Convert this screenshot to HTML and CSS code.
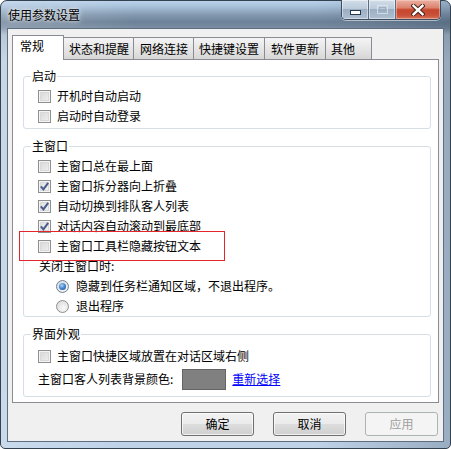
FILE: index.html
```html
<!DOCTYPE html>
<html lang="zh-CN">
<head>
<meta charset="utf-8">
<title>使用参数设置</title>
<link rel="stylesheet" href="styles.css">
</head>
<body>
<div class="window">
  <div class="titlebar">
    <div class="title">使用参数设置</div>
    <div class="caption">
      <div class="cbtn min">
        <svg width="11" height="5" viewBox="0 0 11 5"><rect x="0.5" y="0.5" width="10" height="4" fill="#fff" stroke="#2a3a4e"/></svg>
      </div>
      <div class="cbtn max">
        <svg width="11" height="9" viewBox="0 0 11 9"><rect x="0.5" y="0.5" width="10" height="8" fill="none" stroke="#e4ebf2" stroke-opacity="0.7"/><rect x="2.5" y="2.5" width="6" height="3" fill="none" stroke="#9aaabb" stroke-opacity="0.8"/></svg>
      </div>
      <div class="cbtn close">
        <svg width="14" height="12" viewBox="0 0 14 12"><path d="M2.5 1.8 L11.5 10.2 M11.5 1.8 L2.5 10.2" stroke="#4b2119" stroke-width="4.4" stroke-linecap="square"/><path d="M2.5 1.8 L11.5 10.2 M11.5 1.8 L2.5 10.2" stroke="#fff" stroke-width="2.4" stroke-linecap="square"/></svg>
      </div>
    </div>
  </div>
  <div class="client">
    <div class="tabs">
      <div class="tab sel">常规</div>
      <div class="tab t2">状态和提醒</div>
      <div class="tab t3">网络连接</div>
      <div class="tab t4">快捷键设置</div>
      <div class="tab t5">软件更新</div>
      <div class="tab t6">其他</div>
    </div>
    <div class="panel">
      <fieldset class="group g1">
        <legend>启动</legend>
        <div class="gbody b1">
          <div class="row"><span class="cb"></span>开机时自动启动</div>
          <div class="row"><span class="cb"></span>启动时自动登录</div>
        </div>
      </fieldset>
      <fieldset class="group g2">
        <legend>主窗口</legend>
        <div class="gbody b2">
          <div class="row"><span class="cb"></span>主窗口总在最上面</div>
          <div class="row"><span class="cb on"><svg width="9" height="9" viewBox="0 0 9 9"><path d="M0.8 4.4 L3.4 7.4 L8.2 0.9" fill="none" stroke="#4a5c8c" stroke-width="2"/></svg></span>主窗口拆分器向上折叠</div>
          <div class="row"><span class="cb on"><svg width="9" height="9" viewBox="0 0 9 9"><path d="M0.8 4.4 L3.4 7.4 L8.2 0.9" fill="none" stroke="#4a5c8c" stroke-width="2"/></svg></span>自动切换到排队客人列表</div>
          <div class="row"><span class="cb on"><svg width="9" height="9" viewBox="0 0 9 9"><path d="M0.8 4.4 L3.4 7.4 L8.2 0.9" fill="none" stroke="#4a5c8c" stroke-width="2"/></svg></span>对话内容自动滚动到最底部</div>
          <div class="row"><span class="cb"></span>主窗口工具栏隐藏按钮文本</div>
          <div class="row sub">关闭主窗口时:</div>
          <div class="row radio-row"><span class="rb on"><span class="dot"></span></span>隐藏到任务栏通知区域，不退出程序。</div>
          <div class="row radio-row"><span class="rb"></span>退出程序</div>
        </div>
      </fieldset>
      <fieldset class="group g3">
        <legend>界面外观</legend>
        <div class="gbody b3">
          <div class="row"><span class="cb"></span>主窗口快捷区域放置在对话区域右侧</div>
          <div class="row color-row"><span class="clabel">主窗口客人列表背景颜色:</span><span class="swatch"></span><a class="link" href="#">重新选择</a></div>
        </div>
      </fieldset>
    </div>
    <div class="actions">
      <button class="btn">确定</button>
      <button class="btn">取消</button>
      <button class="btn" disabled>应用</button>
    </div>
  </div>
  <div class="annot"></div>
</div>
</body>
</html>
```

FILE: styles.css
```css
* { box-sizing: border-box; }
html, body { margin: 0; padding: 0; background: #ffffff; }
body {
  width: 451px;
  height: 449px;
  font-family: "Noto Sans CJK SC", "Noto Sans", sans-serif;
  font-size: 12px;
  color: #000;
}
.window {
  position: relative;
  width: 451px;
  height: 449px;
  border: 1px solid #34414f;
  border-radius: 7px 7px 5px 5px;
  padding: 0 6px 6px 6px;
  background:
    linear-gradient(to right, rgba(255,255,255,0.18), rgba(255,255,255,0) 30%, rgba(20,40,60,0) 70%, rgba(20,40,60,0.22)),
    linear-gradient(#b9d2ea 0, #aac3dc 5px, #8399b0 14px, #6d8298 21px, #7b8ea3 27px, #aabdd1 34px, #bccde0 60px, #bed2e8 100%);
  display: flex;
  flex-direction: column;
}
.titlebar {
  height: 27px;
  display: flex;
  align-items: flex-start;
}
.title {
  padding-left: 1px;
  margin-top: 6px;
  line-height: 16px;
  color: #000;
  text-shadow: 0 0 6px rgba(255,255,255,0.9), 0 0 3px rgba(255,255,255,0.8);
}
.caption {
  margin-left: auto;
  margin-right: 3px;
  margin-top: -1px;
  display: flex;
  height: 20px;
  border: 1px solid #3d4d60;
  border-top: none;
  border-radius: 0 0 5px 5px;
  overflow: hidden;
  box-shadow: 0 1px 0 rgba(255,255,255,0.5);
}
.cbtn {
  height: 19px;
  display: flex;
  align-items: center;
  justify-content: center;
}
.cbtn.min, .cbtn.max {
  width: 27px;
  background: linear-gradient(#d2dde8 0, #bccbda 45%, #9cafc3 50%, #aebfd1 100%);
  box-shadow: inset 0 0 0 1px rgba(255,255,255,0.45);
  border-right: 1px solid #5b6d80;
}
.cbtn.min svg { margin-top: 5px; }
.cbtn.close {
  width: 44px;
  background: linear-gradient(#eab1a2 0, #dc8470 40%, #c6462d 52%, #c9503a 80%, #d9745a 100%);
  box-shadow: inset 0 0 0 1px rgba(255,220,210,0.45);
}
.client {
  flex: 1;
  border: 1px solid #5e6e80;
  background: #f0f0f0;
  padding: 6px 4px 0 4px;
  display: flex;
  flex-direction: column;
}
.tabs {
  display: flex;
  align-items: flex-end;
  height: 25px;
  margin-bottom: -1px;
}
.tab {
  height: 22px;
  margin-bottom: 1px;
  border-top: 1px solid #898c95;
  border-right: 1px solid #898c95;
  background: linear-gradient(#f4f4f4, #e6e6e6 50%, #d7d7d7);
  padding: 3px 0 0 5px;
  line-height: 16px;
  white-space: nowrap;
}
.tab.sel {
  position: relative;
  z-index: 1;
  width: 52px;
  height: 25px;
  margin-bottom: 0;
  border-left: 1px solid #898c95;
  background: #fff;
  padding: 2px 0 0 7px;
}
.tab.t2 { width: 70px; }
.tab.t3 { width: 60px; padding-left: 6px; }
.tab.t4 { width: 71px; }
.tab.t5 { width: 61px; padding-left: 6px; }
.tab.t6 { width: 46px; }
.panel {
  height: 344px;
  border: 1px solid #898c95;
  background: #fff;
  padding: 0 7px 0 10px;
}
.group {
  margin: 0;
  padding: 0;
  min-width: 0;
  border: 1px solid #d5dfe5;
  border-radius: 3px;
}
.group legend {
  margin-left: 7px;
  padding: 0 1px;
  line-height: 14px;
  height: 14px;
}
.g1 { margin-top: 9px; }
.g2 { margin-top: 10px; }
.g3 { margin-top: 10px; }
.gbody { padding-left: 14px; }
.b1 { padding-top: 3px; padding-bottom: 2px; }
.b2 { padding-top: 3px; padding-bottom: 0; }
.b3 { padding-top: 5px; padding-bottom: 6px; }
.row {
  height: 20px;
  line-height: 20px;
  display: flex;
  align-items: center;
  white-space: nowrap;
}
.cb {
  width: 13px;
  height: 13px;
  flex: none;
  margin-right: 6px;
  border: 1px solid #8e8f8f;
  background: linear-gradient(135deg, #d4d4d4, #f3f3f3);
  box-shadow: inset 0 0 0 1px #f4f4f4, inset 0 0 0 2px #d9d9d9;
  display: flex;
  align-items: center;
  justify-content: center;
}
.cb.on { background: linear-gradient(135deg, #dcdcdc, #f6f6f6); }
.sub { padding-left: 1px; }
.radio-row { padding-left: 18px; }
.rb {
  width: 13px;
  height: 13px;
  flex: none;
  margin-right: 7px;
  border-radius: 50%;
  border: 1px solid #8e8f8f;
  background: radial-gradient(circle at 60% 65%, #fafafa, #e0e0e0 70%, #cfcfcf);
  display: flex;
  align-items: center;
  justify-content: center;
}
.rb.on { border-color: #6f8296; }
.dot {
  width: 7px;
  height: 7px;
  border-radius: 50%;
  background: radial-gradient(circle at 40% 35%, #a9d4fb, #3a7cc8 55%, #1d4f91);
}
.color-row {
  height: 22px;
  margin-top: 2px;
}
.clabel { margin-right: 9px; }
.swatch {
  width: 44px;
  height: 21px;
  border: 1px solid #646464;
  background: #808080;
  margin-right: 6px;
}
.link {
  color: #0000ff;
  text-decoration: underline;
}
.actions {
  display: flex;
  justify-content: flex-end;
  gap: 19px;
  padding: 9px 1px 0 0;
}
.btn {
  width: 73px;
  height: 24px;
  margin: 0;
  padding: 0;
  border: 1px solid #707070;
  border-radius: 3px;
  background: linear-gradient(#f2f2f2, #ebebeb 48%, #dddddd 52%, #cfcfcf);
  box-shadow: inset 0 0 0 1px rgba(255,255,255,0.7);
  font-family: "Noto Sans CJK SC", "Noto Sans", sans-serif;
  font-size: 12px;
  color: #000;
  line-height: 20px;
}
.btn:disabled {
  border-color: #adb2b5;
  background: #f4f4f4;
  box-shadow: none;
  color: #a0a0a0;
}
.annot {
  position: absolute;
  left: 18px;
  top: 230px;
  width: 206px;
  height: 30px;
  border: 1px solid #e3262b;
  pointer-events: none;
}
```
